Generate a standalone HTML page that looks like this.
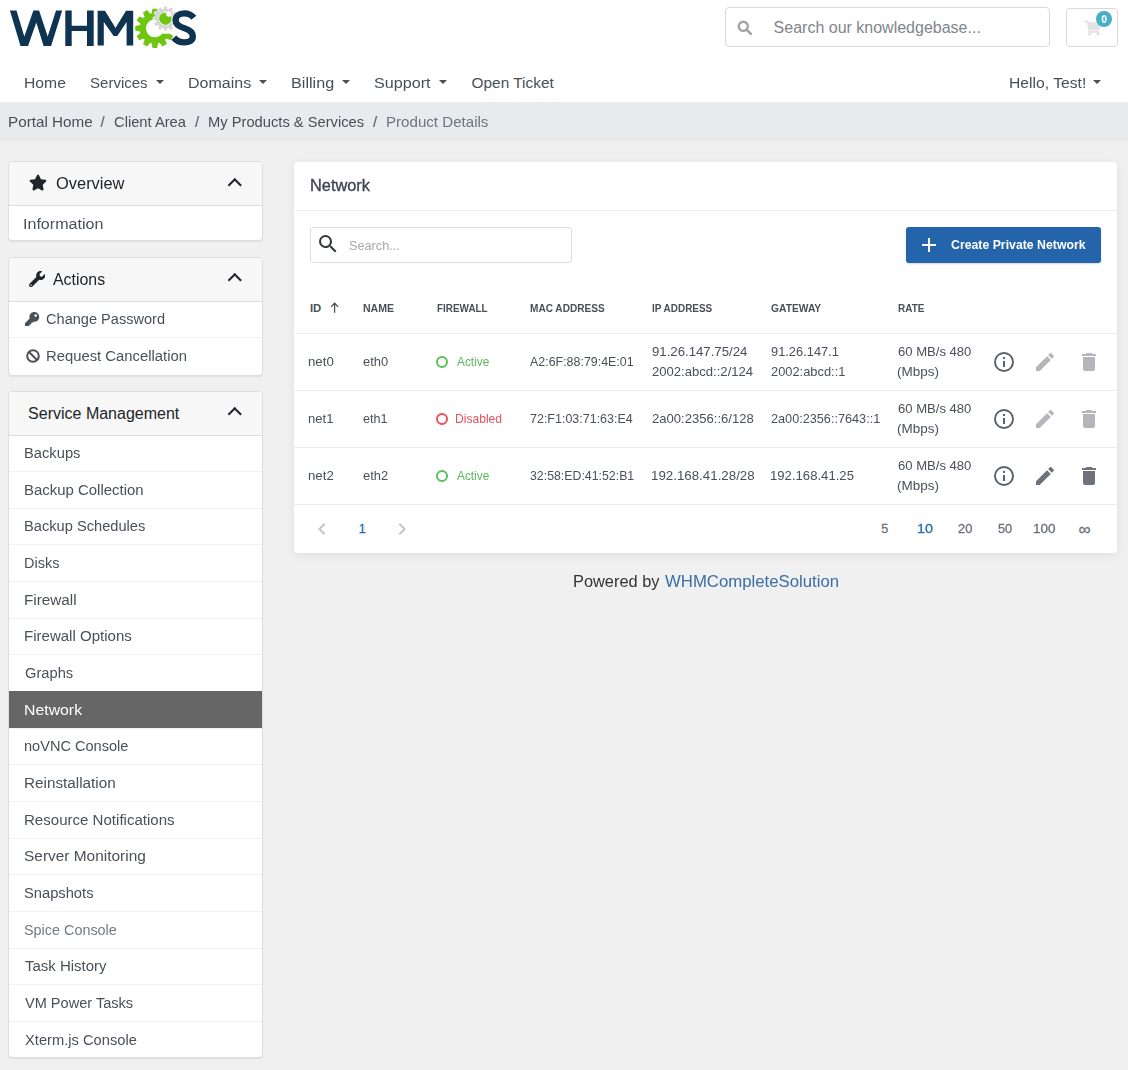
<!DOCTYPE html>
<html><head><meta charset="utf-8"><title>Network</title>
<style>
*{box-sizing:border-box}
html,body{margin:0;padding:0}
body{width:1128px;height:1070px;overflow:hidden;position:relative;background:#f0f0f0;font-family:"Liberation Sans",sans-serif;color:#333}
.a{position:absolute;white-space:nowrap;line-height:1}
#hdr{position:absolute;left:0;top:0;width:1128px;height:102px;background:#fff}
#bc{position:absolute;left:0;top:102px;width:1128px;height:39px;background:#e8ebee}
.caret{position:absolute;width:0;height:0;border-left:4.2px solid transparent;border-right:4.2px solid transparent;border-top:4.5px solid #484f57;top:80px}
.card{position:absolute;left:8px;width:255px;background:#fff;border:1px solid #dedede;border-radius:4px;box-shadow:0 1px 1px rgba(0,0,0,.07)}
.ch{position:absolute;left:0;top:0;right:0;background:#f7f7f7;border-bottom:1px solid #dcdcdc;border-radius:3px 3px 0 0}
.sep{position:absolute;left:9px;width:253px;height:1px;background:#f1f1f1}
.chev{position:absolute;width:9.5px;height:9.5px;border-left:2.4px solid #212529;border-top:2.4px solid #212529;transform:rotate(45deg)}
#main{position:absolute;left:294px;top:162px;width:823px;height:391px;background:#fff;border-radius:4px;box-shadow:0 2px 10px rgba(0,0,0,.07)}
.hl{position:absolute;left:294px;width:823px;height:1px;background:#e9ebf0}
</style></head>
<body>
<div id="hdr"></div>
<!--LOGO-->
<svg class="a" style="left:0;top:0" width="210" height="55" viewBox="0 0 210 55">
  <defs><mask id="cm"><rect x="0" y="0" width="210" height="55" fill="#fff"/><polygon points="154.9,28.3 174.9,-6.3 200,-6.3 200,33.8 154.9,33.8" fill="#000"/></mask></defs>
  <g fill="#0f3452">
    <polygon points="9.9,10.6 16.5,10.6 24.3,36.5 33.4,10.6 39.1,10.6 47.7,36.5 56,10.6 62.2,10.6 51.1,46.1 43.6,46.1 36.3,22.5 28,46.1 20.5,46.1"/>
    <polygon points="65.3,10.6 71.7,10.6 71.7,25.7 87,25.7 87,10.6 93.7,10.6 93.7,46.1 87,46.1 87,31 71.7,31 71.7,46.1 65.3,46.1"/>
    <polygon points="97.6,10.7 105,10.7 115.5,28 126,10.7 133.2,10.7 133.2,45.6 126.6,45.6 126.6,22 117.3,36 113.7,36 103.8,22 103.8,45.6 97.6,45.6"/>
  </g>
  <path d="M169.87,25.12 L174.55,25.89 L174.55,30.71 L169.87,31.48 L169.75,32.00 L169.61,32.52 L169.45,33.03 L173.13,36.04 L170.71,40.22 L166.27,38.54 L165.91,38.93 L165.53,39.31 L165.14,39.67 L166.82,44.11 L162.64,46.53 L159.63,42.85 L159.12,43.01 L158.60,43.15 L158.08,43.27 L157.31,47.95 L152.49,47.95 L151.72,43.27 L151.20,43.15 L150.68,43.01 L150.17,42.85 L147.16,46.53 L142.98,44.11 L144.66,39.67 L144.27,39.31 L143.89,38.93 L143.53,38.54 L139.09,40.22 L136.67,36.04 L140.35,33.03 L140.19,32.52 L140.05,32.00 L139.93,31.48 L135.25,30.71 L135.25,25.89 L139.93,25.12 L140.05,24.60 L140.19,24.08 L140.35,23.57 L136.67,20.56 L139.09,16.38 L143.53,18.06 L143.89,17.67 L144.27,17.29 L144.66,16.93 L142.98,12.49 L147.16,10.07 L150.17,13.75 L150.68,13.59 L151.20,13.45 L151.72,13.33 L152.49,8.65 L157.31,8.65 L158.08,13.33 L158.60,13.45 L159.12,13.59 L159.63,13.75 L162.64,10.07 L166.82,12.49 L165.14,16.93 L165.53,17.29 L165.91,17.67 L166.27,18.06 L170.71,16.38 L173.13,20.56 L169.45,23.57 L169.61,24.08 L169.75,24.60 Z M163.90,28.30 A9.00,9.00 0 1,0 145.90,28.30 A9.00,9.00 0 1,0 163.90,28.30 Z" fill="#6fc60f" fill-rule="evenodd" mask="url(#cm)"/>
  <path d="M163.68,8.77 L163.96,6.09 L167.04,6.09 L167.32,8.77 L167.83,8.88 L168.34,9.01 L168.84,9.17 L170.42,7.00 L173.08,8.54 L171.99,11.00 L172.38,11.35 L172.75,11.72 L173.10,12.11 L175.56,11.02 L177.10,13.68 L174.93,15.26 L175.09,15.76 L175.22,16.27 L175.33,16.78 L178.01,17.06 L178.01,20.14 L175.33,20.42 L175.22,20.93 L175.09,21.44 L174.93,21.94 L177.10,23.52 L175.56,26.18 L173.10,25.09 L172.75,25.48 L172.38,25.85 L171.99,26.20 L173.08,28.66 L170.42,30.20 L168.84,28.03 L168.34,28.19 L167.83,28.32 L167.32,28.43 L167.04,31.11 L163.96,31.11 L163.68,28.43 L163.17,28.32 L162.66,28.19 L162.16,28.03 L160.58,30.20 L157.92,28.66 L159.01,26.20 L158.62,25.85 L158.25,25.48 L157.90,25.09 L155.44,26.18 L153.90,23.52 L156.07,21.94 L155.91,21.44 L155.78,20.93 L155.67,20.42 L152.99,20.14 L152.99,17.06 L155.67,16.78 L155.78,16.27 L155.91,15.76 L156.07,15.26 L153.90,13.68 L155.44,11.02 L157.90,12.11 L158.25,11.72 L158.62,11.35 L159.01,11.00 L157.92,8.54 L160.58,7.00 L162.16,9.17 L162.66,9.01 L163.17,8.88 Z M172.00,18.60 A6.50,6.50 0 1,0 159.00,18.60 A6.50,6.50 0 1,0 172.00,18.60 Z" fill="#d5d5d5" fill-rule="evenodd" stroke="#fff" stroke-width="0.6"/>
  <circle cx="165.5" cy="18.8" r="6.1" fill="#6fc60f"/>
  <circle cx="168.8" cy="14.0" r="2.7" fill="#fff"/>
  <path d="M193.8,17.8 C191,14.2 187.5,13.4 184.2,13.4 C179,13.4 175.6,16 175.6,20.3 C175.6,25 179.5,26.8 184.5,28.3 C189.5,29.8 192.8,32.2 192.8,36.6 C192.8,40.8 189,42.4 184.3,42.4 C179.8,42.4 176.3,40.6 173.8,37.6" fill="none" stroke="#fff" stroke-width="7.6"/>
  <path d="M193.8,17.8 C191,14.2 187.5,13.4 184.2,13.4 C179,13.4 175.6,16 175.6,20.3 C175.6,25 179.5,26.8 184.5,28.3 C189.5,29.8 192.8,32.2 192.8,36.6 C192.8,40.8 189,42.4 184.3,42.4 C179.8,42.4 176.3,40.6 173.8,37.6" fill="none" stroke="#0f3452" stroke-width="6.4"/>
</svg>
<!-- search -->
<div class="a" style="left:725px;top:7px;width:325px;height:40px;border:1px solid #d9d9d9;border-radius:4px;background:#fff"></div>
<svg class="a" style="left:737px;top:20px" width="16" height="16" viewBox="0 0 16 16"><circle cx="6.3" cy="6.3" r="4.6" fill="none" stroke="#a3a3a3" stroke-width="2.4"/><line x1="9.6" y1="9.6" x2="13.8" y2="13.8" stroke="#a3a3a3" stroke-width="2.6" stroke-linecap="round"/></svg>
<!-- cart -->
<div class="a" style="left:1066px;top:8px;width:52px;height:39px;border:1px solid #d9d9d9;border-radius:4px;background:#fff"></div>
<!--CART-->
<svg class="a" style="left:1083.5px;top:19.8px" width="17" height="16" viewBox="0 0 576 512"><path fill="#e2e2e2" d="M528.12 301.319l47.273-208C578.806 78.301 567.391 64 551.99 64H159.208l-9.166-44.810C147.758 8.021 137.930 0 126.529 0H24C10.745 0 0 10.745 0 24v16c0 13.255 10.745 24 24 24h69.883l70.248 343.435C147.325 417.100 136 435.222 136 456c0 30.928 25.072 56 56 56s56-25.072 56-56c0-15.674-6.447-29.835-16.824-40h209.647C430.447 426.165 424 440.326 424 456c0 30.928 25.072 56 56 56s56-25.072 56-56c0-22.172-12.888-41.332-31.579-50.405l5.517-24.276c3.413-15.018-8.002-29.319-23.403-29.319H218.117l-6.545-32h293.145c11.206 0 20.920-7.754 23.403-18.681z"/></svg>
<div class="a" style="left:1096px;top:11px;width:16px;height:16px;border-radius:50%;background:#47afc3;color:#fff;font-size:10px;font-weight:bold;text-align:center;line-height:17px">0</div>
<!-- nav carets -->
<div class="caret" style="left:155.5px"></div>
<div class="caret" style="left:259px"></div>
<div class="caret" style="left:341.5px"></div>
<div class="caret" style="left:439px"></div>
<div class="caret" style="left:1093px"></div>
<div id="bc"></div>

<!-- sidebar card 1 -->
<div class="card" style="top:161px;height:80px"><div class="ch" style="height:44px"></div></div>
<svg class="a" style="left:29px;top:174px" width="18" height="17" viewBox="0 0 576 512"><path fill="#212529" d="M259.3 17.8L194 150.2 47.9 171.5c-26.2 3.8-36.7 36.1-17.7 54.6l105.7 103-25 145.5c-4.5 26.3 23.2 46 46.4 33.7L288 439.6l130.7 68.7c23.2 12.2 50.9-7.4 46.4-33.7l-25-145.5 105.7-103c19-18.5 8.5-50.8-17.700-54.6L382 150.2 316.7 17.8c-11.7-23.6-45.6-23.9-57.4 0z"/></svg>
<div class="chev" style="left:230.3px;top:180px"></div>

<!-- sidebar card 2 -->
<div class="card" style="top:257px;height:119px"><div class="ch" style="height:44px"></div></div>
<div class="sep" style="top:337px"></div>
<svg class="a" style="left:28.8px;top:271px" width="16.2" height="16.2" viewBox="0 0 512 512"><path fill="#212529" d="M507.73 109.1c-2.24-9.03-13.540-12.09-20.12-5.51l-74.36 74.36-67.88-11.31-11.31-67.88 74.36-74.36c6.62-6.62 3.43-17.9-5.66-20.16-47.38-11.74-99.55.91-136.58 37.93-39.64 39.64-50.55 97.1-34.05 147.2L18.74 402.76c-24.99 24.99-24.99 65.51 0 90.5 24.99 24.99 65.51 24.99 90.5 0l213.21-213.21c50.12 16.71 107.47 5.68 147.37-34.22 37.07-37.07 49.7-89.32 37.91-136.73zM64 472c-13.25 0-24-10.75-24-24 0-13.26 10.750-24 24-24s24 10.74 24 24c0 13.25-10.75 24-24 24z"/></svg>
<div class="chev" style="left:230.3px;top:275px"></div>
<svg class="a" style="left:25.4px;top:311.7px" width="14.2" height="14.2" viewBox="0 0 512 512"><path fill="#495057" d="M512 176.001C512 273.203 433.202 352 336 352c-11.22 0-22.19-1.062-32.827-3.069l-24.012 27.014A23.999 23.999 0 0 1 261.223 384H224v40c0 13.255-10.745 24-24 24h-40v40c0 13.255-10.745 24-24 24H24c-13.255 0-24-10.745-24-24v-78.059c0-6.365 2.529-12.47 7.029-16.971l161.802-161.802C163.108 213.814 160 195.271 160 176 160 78.798 238.797.001 335.999 0 433.488-.001 512 78.511 512 176.001zM336 128c0 26.51 21.49 48 48 48s48-21.49 48-48-21.49-48-48-48-48 21.49-48 48z"/></svg>
<svg class="a" style="left:26px;top:349px" width="14" height="14" viewBox="0 0 14 14"><circle cx="7" cy="7" r="5.8" fill="none" stroke="#495057" stroke-width="2"/><line x1="3" y1="3" x2="11" y2="11" stroke="#495057" stroke-width="2"/></svg>

<!-- sidebar card 3 -->
<div class="card" style="top:391px;height:667px"><div class="ch" style="height:44px"></div></div>
<div class="chev" style="left:230.3px;top:409px"></div>
<div class="sep" style="top:471.0px"></div>
<div class="sep" style="top:507.6px"></div>
<div class="sep" style="top:544.3px"></div>
<div class="sep" style="top:580.9px"></div>
<div class="sep" style="top:617.6px"></div>
<div class="sep" style="top:654.3px"></div>
<div class="sep" style="top:690.9px"></div>
<div class="a" style="left:9px;top:691px;width:253px;height:36.8px;background:#666"></div>
<div class="sep" style="top:727.6px"></div>
<div class="sep" style="top:764.2px"></div>
<div class="sep" style="top:800.9px"></div>
<div class="sep" style="top:837.6px"></div>
<div class="sep" style="top:874.2px"></div>
<div class="sep" style="top:910.9px"></div>
<div class="sep" style="top:947.5px"></div>
<div class="sep" style="top:984.2px"></div>
<div class="sep" style="top:1020.9px"></div>

<!-- main card -->
<div id="main"></div>
<div class="hl" style="top:210px"></div>
<div class="a" style="left:310px;top:227px;width:262px;height:36px;border:1px solid #dcdde6;border-radius:3px"></div>
<svg class="a" style="left:315.6px;top:232px" width="24" height="24" viewBox="0 0 24 24"><path fill="#33363c" d="M9.5,3A6.5,6.5 0 0,1 16,9.5C16,11.11 15.41,12.59 14.44,13.73L14.71,14H15.5L20.5,19L19,20.5L14,15.5V14.71L13.73,14.44C12.59,15.41 11.11,16 9.5,16A6.5,6.5 0 0,1 3,9.5A6.5,6.5 0 0,1 9.5,3M9.5,5C7,5 5,7 5,9.5C5,12 7,14 9.5,14C12,14 14,12 14,9.5C14,7 12,5 9.5,5Z"/></svg>
<div class="a" style="left:906px;top:227px;width:195px;height:36px;background:#2364aa;border-radius:3px;box-shadow:0 1px 2px rgba(0,0,0,.15)"></div>
<svg class="a" style="left:916.5px;top:233px" width="24" height="24" viewBox="0 0 24 24"><path fill="#fff" d="M19,13H13V19H11V13H5V11H11V5H13V11H19V13Z"/></svg>
<svg class="a" style="left:329.5px;top:302.3px" width="10" height="11" viewBox="0 0 10 11"><path d="M4.6,1.2V10.8M1,4.9L4.6,1.2L8.2,4.9" fill="none" stroke="#4a4f58" stroke-width="1.25"/></svg>
<div class="hl" style="top:333px"></div>
<div class="hl" style="top:390px"></div>
<div class="hl" style="top:447px"></div>
<div class="hl" style="top:504px"></div>
<div class="a" style="left:436px;top:356px;width:12px;height:12px;border:2px solid #5ac05a;border-radius:50%"></div>
<div class="a" style="left:436px;top:413px;width:12px;height:12px;border:2px solid #e8505b;border-radius:50%"></div>
<div class="a" style="left:436px;top:470px;width:12px;height:12px;border:2px solid #5ac05a;border-radius:50%"></div>
<svg class="a" style="left:992px;top:350px" width="24" height="24" viewBox="0 0 24 24"><path fill="#5c626c" d="M11,9H13V7H11M12,20C7.59,20 4,16.41 4,12C4,7.59 7.59,4 12,4C16.41,4 20,7.59 20,12C20,16.41 16.41,20 12,20M12,2A10,10 0 0,0 2,12A10,10 0 0,0 12,22A10,10 0 0,0 22,12A10,10 0 0,0 12,2M11,17H13V11H11V17Z"/></svg>
<svg class="a" style="left:1033px;top:350px" width="24" height="24" viewBox="0 0 24 24"><path fill="#b4b6bb" d="M20.71,7.04C21.1,6.65 21.1,6 20.71,5.63L18.37,3.29C18,2.9 17.35,2.9 16.96,3.29L15.12,5.12L18.87,8.87M3,17.25V21H6.75L17.81,9.93L14.06,6.18L3,17.25Z"/></svg>
<svg class="a" style="left:1076.5px;top:350px" width="24" height="24" viewBox="0 0 24 24"><path fill="#b4b6bb" d="M19,4H15.5L14.5,3H9.5L8.5,4H5V6H19M6,19A2,2 0 0,0 8,21H16A2,2 0 0,0 18,19V7H6V19Z"/></svg>
<svg class="a" style="left:992px;top:407px" width="24" height="24" viewBox="0 0 24 24"><path fill="#5c626c" d="M11,9H13V7H11M12,20C7.59,20 4,16.41 4,12C4,7.59 7.59,4 12,4C16.41,4 20,7.59 20,12C20,16.41 16.41,20 12,20M12,2A10,10 0 0,0 2,12A10,10 0 0,0 12,22A10,10 0 0,0 22,12A10,10 0 0,0 12,2M11,17H13V11H11V17Z"/></svg>
<svg class="a" style="left:1033px;top:407px" width="24" height="24" viewBox="0 0 24 24"><path fill="#b4b6bb" d="M20.71,7.04C21.1,6.65 21.1,6 20.71,5.63L18.37,3.29C18,2.9 17.35,2.9 16.96,3.29L15.12,5.12L18.87,8.87M3,17.25V21H6.75L17.81,9.93L14.06,6.18L3,17.25Z"/></svg>
<svg class="a" style="left:1076.5px;top:407px" width="24" height="24" viewBox="0 0 24 24"><path fill="#b4b6bb" d="M19,4H15.5L14.5,3H9.5L8.5,4H5V6H19M6,19A2,2 0 0,0 8,21H16A2,2 0 0,0 18,19V7H6V19Z"/></svg>
<svg class="a" style="left:992px;top:464px" width="24" height="24" viewBox="0 0 24 24"><path fill="#5c626c" d="M11,9H13V7H11M12,20C7.59,20 4,16.41 4,12C4,7.59 7.59,4 12,4C16.41,4 20,7.59 20,12C20,16.41 16.41,20 12,20M12,2A10,10 0 0,0 2,12A10,10 0 0,0 12,22A10,10 0 0,0 22,12A10,10 0 0,0 12,2M11,17H13V11H11V17Z"/></svg>
<svg class="a" style="left:1033px;top:464px" width="24" height="24" viewBox="0 0 24 24"><path fill="#6d727b" d="M20.71,7.04C21.1,6.65 21.1,6 20.71,5.63L18.37,3.29C18,2.9 17.35,2.9 16.96,3.29L15.12,5.12L18.87,8.87M3,17.25V21H6.75L17.81,9.93L14.06,6.18L3,17.25Z"/></svg>
<svg class="a" style="left:1076.5px;top:464px" width="24" height="24" viewBox="0 0 24 24"><path fill="#6d727b" d="M19,4H15.5L14.5,3H9.5L8.5,4H5V6H19M6,19A2,2 0 0,0 8,21H16A2,2 0 0,0 18,19V7H6V19Z"/></svg>
<!-- pagination -->
<svg class="a" style="left:310px;top:517px" width="24" height="24" viewBox="0 0 24 24"><path fill="#c3c5ca" d="M15.41,16.58L10.83,12L15.41,7.41L14,6L8,12L14,18L15.41,16.58Z"/></svg>
<svg class="a" style="left:390px;top:517px" width="24" height="24" viewBox="0 0 24 24"><path fill="#c3c5ca" d="M8.59,16.58L13.17,12L8.59,7.41L10,6L16,12L10,18L8.59,16.58Z"/></svg>
<div class="a" id="nav_home" style="left:24.20px;top:75.00px;font-size:15.4px;color:#484f57;transform:scaleX(1.0202);transform-origin:0 0">Home</div>
<div class="a" id="nav_services" style="left:89.80px;top:75.00px;font-size:15.4px;color:#484f57;transform:scaleX(0.9761);transform-origin:0 0">Services</div>
<div class="a" id="nav_domains" style="left:187.80px;top:75.00px;font-size:15.4px;color:#484f57;transform:scaleX(1.0403);transform-origin:0 0">Domains</div>
<div class="a" id="nav_billing" style="left:291.00px;top:75.00px;font-size:15.4px;color:#484f57;transform:scaleX(1.0512);transform-origin:0 0">Billing</div>
<div class="a" id="nav_support" style="left:373.60px;top:75.00px;font-size:15.4px;color:#484f57;transform:scaleX(1.0493);transform-origin:0 0">Support</div>
<div class="a" id="nav_open" style="left:471.60px;top:75.00px;font-size:15.4px;color:#484f57">Open Ticket</div>
<div class="a" id="nav_hello" style="left:1008.60px;top:75.00px;font-size:15.4px;color:#484f57;transform:scaleX(1.0193);transform-origin:0 0">Hello, Test!</div>
<div class="a" id="bc1" style="left:7.80px;top:114.60px;font-size:14.6px;color:#484f57;transform:scaleX(1.0452);transform-origin:0 0">Portal Home</div>
<div class="a" id="bcs1" style="left:100.50px;top:114.60px;font-size:14.6px;color:#484f57">/</div>
<div class="a" id="bc2" style="left:113.60px;top:114.60px;font-size:14.6px;color:#484f57;transform:scaleX(1.0084);transform-origin:0 0">Client Area</div>
<div class="a" id="bcs2" style="left:195.00px;top:114.60px;font-size:14.6px;color:#484f57">/</div>
<div class="a" id="bc3" style="left:207.60px;top:114.60px;font-size:14.6px;color:#484f57;transform:scaleX(1.0078);transform-origin:0 0">My Products &amp; Services</div>
<div class="a" id="bcs3" style="left:373.00px;top:114.60px;font-size:14.6px;color:#484f57">/</div>
<div class="a" id="bc4" style="left:385.80px;top:114.60px;font-size:14.6px;color:#484f57;color:#6c757d;transform:scaleX(1.0348);transform-origin:0 0">Product Details</div>
<div class="a" id="kb" style="left:773.60px;top:19.50px;font-size:16px;color:#80858c">Search our knowledgebase...</div>
<div class="a" id="sh_over" style="left:55.60px;top:176.10px;font-size:16px;color:#212529;transform:scaleX(1.0270);transform-origin:0 0">Overview</div>
<div class="a" id="si_info" style="left:22.80px;top:217.15px;font-size:14px;color:#495057;transform:scaleX(1.1478);transform-origin:0 0">Information</div>
<div class="a" id="sh_act" style="left:53.20px;top:271.90px;font-size:16px;color:#212529;transform:scaleX(0.9928);transform-origin:0 0">Actions</div>
<div class="a" id="si_chpw" style="left:46.40px;top:312.35px;font-size:14px;color:#495057;transform:scaleX(1.0408);transform-origin:0 0">Change Password</div>
<div class="a" id="si_cancel" style="left:46.00px;top:348.65px;font-size:14px;color:#495057;transform:scaleX(1.0590);transform-origin:0 0">Request Cancellation</div>
<div class="a" id="sh_sm" style="left:28.10px;top:406.10px;font-size:16px;color:#212529">Service Management</div>
<div class="a" id="sm0" style="left:23.60px;top:445.95px;font-size:14px;color:#495057;transform:scaleX(1.0511);transform-origin:0 0">Backups</div>
<div class="a" id="sm1" style="left:23.60px;top:482.61px;font-size:14px;color:#495057;transform:scaleX(1.0676);transform-origin:0 0">Backup Collection</div>
<div class="a" id="sm2" style="left:23.60px;top:519.27px;font-size:14px;color:#495057;transform:scaleX(1.0459);transform-origin:0 0">Backup Schedules</div>
<div class="a" id="sm3" style="left:23.60px;top:555.93px;font-size:14px;color:#495057;transform:scaleX(1.0339);transform-origin:0 0">Disks</div>
<div class="a" id="sm4" style="left:23.60px;top:592.59px;font-size:14px;color:#495057;transform:scaleX(1.0919);transform-origin:0 0">Firewall</div>
<div class="a" id="sm5" style="left:23.60px;top:629.25px;font-size:14px;color:#495057;transform:scaleX(1.0738);transform-origin:0 0">Firewall Options</div>
<div class="a" id="sm6" style="left:24.60px;top:665.91px;font-size:14px;color:#495057;transform:scaleX(1.0500);transform-origin:0 0">Graphs</div>
<div class="a" id="sm7" style="left:23.60px;top:702.57px;font-size:14px;color:#495057;color:#fff;transform:scaleX(1.1304);transform-origin:0 0">Network</div>
<div class="a" id="sm8" style="left:23.60px;top:739.23px;font-size:14px;color:#495057;transform:scaleX(1.0393);transform-origin:0 0">noVNC Console</div>
<div class="a" id="sm9" style="left:23.60px;top:775.89px;font-size:14px;color:#495057;transform:scaleX(1.0904);transform-origin:0 0">Reinstallation</div>
<div class="a" id="sm10" style="left:23.60px;top:812.55px;font-size:14px;color:#495057;transform:scaleX(1.0755);transform-origin:0 0">Resource Notifications</div>
<div class="a" id="sm11" style="left:23.60px;top:849.21px;font-size:14px;color:#495057;transform:scaleX(1.1028);transform-origin:0 0">Server Monitoring</div>
<div class="a" id="sm12" style="left:23.60px;top:885.87px;font-size:14px;color:#495057;transform:scaleX(1.0503);transform-origin:0 0">Snapshots</div>
<div class="a" id="sm13" style="left:23.60px;top:922.53px;font-size:14px;color:#495057;color:#737a82;transform:scaleX(1.0282);transform-origin:0 0">Spice Console</div>
<div class="a" id="sm14" style="left:24.60px;top:959.19px;font-size:14px;color:#495057;transform:scaleX(1.0691);transform-origin:0 0">Task History</div>
<div class="a" id="sm15" style="left:24.60px;top:995.85px;font-size:14px;color:#495057;transform:scaleX(1.0395);transform-origin:0 0">VM Power Tasks</div>
<div class="a" id="sm16" style="left:24.60px;top:1032.51px;font-size:14px;color:#495057;transform:scaleX(1.0502);transform-origin:0 0">Xterm.js Console</div>
<div class="a" id="m_title" style="left:309.60px;top:178.00px;font-size:16.8px;-webkit-text-stroke:0.35px #3d4350;color:#3d4350;transform:scaleX(0.9748);transform-origin:0 0">Network</div>
<div class="a" id="m_search" style="left:349.20px;top:239.10px;font-size:13px;color:#a5a8ae;transform:scaleX(0.9769);transform-origin:0 0">Search...</div>
<div class="a" id="m_btn" style="left:950.60px;top:238.10px;font-size:13px;font-weight:bold;color:#fff;transform:scaleX(0.9455);transform-origin:0 0">Create Private Network</div>
<div class="a" id="th_id" style="left:309.90px;top:302.60px;font-size:11.3px;font-weight:bold;color:#4a4f58">ID</div>
<div class="a" id="th_name" style="left:362.90px;top:302.60px;font-size:11.3px;font-weight:bold;color:#4a4f58;transform:scaleX(0.9342);transform-origin:0 0">NAME</div>
<div class="a" id="th_fw" style="left:436.50px;top:302.60px;font-size:11.3px;font-weight:bold;color:#4a4f58;transform:scaleX(0.8775);transform-origin:0 0">FIREWALL</div>
<div class="a" id="th_mac" style="left:530.20px;top:302.60px;font-size:11.3px;font-weight:bold;color:#4a4f58;transform:scaleX(0.8918);transform-origin:0 0">MAC ADDRESS</div>
<div class="a" id="th_ip" style="left:652.10px;top:302.60px;font-size:11.3px;font-weight:bold;color:#4a4f58;transform:scaleX(0.8796);transform-origin:0 0">IP ADDRESS</div>
<div class="a" id="th_gw" style="left:771.00px;top:302.60px;font-size:11.3px;font-weight:bold;color:#4a4f58;transform:scaleX(0.9091);transform-origin:0 0">GATEWAY</div>
<div class="a" id="th_rate" style="left:898.30px;top:302.60px;font-size:11.3px;font-weight:bold;color:#4a4f58;transform:scaleX(0.8806);transform-origin:0 0">RATE</div>
<div class="a" id="r0_id" style="left:308.40px;top:354.90px;font-size:13px;color:#4a4f58;transform:scaleX(1.0169);transform-origin:0 0">net0</div>
<div class="a" id="r0_eth" style="left:362.90px;top:354.90px;font-size:13px;color:#4a4f58;transform:scaleX(0.9931);transform-origin:0 0">eth0</div>
<div class="a" id="r0_st" style="left:456.70px;top:354.90px;font-size:13px;color:#5cb85c;transform:scaleX(0.9116);transform-origin:0 0">Active</div>
<div class="a" id="r0_mac" style="left:530.20px;top:354.90px;font-size:13px;color:#4a4f58;transform:scaleX(0.9560);transform-origin:0 0">A2:6F:88:79:4E:01</div>
<div class="a" id="r0_ip0" style="left:652.10px;top:344.90px;font-size:13px;color:#4a4f58;transform:scaleX(1.0150);transform-origin:0 0">91.26.147.75/24</div>
<div class="a" id="r0_ip1" style="left:652.10px;top:365.00px;font-size:13px;color:#4a4f58;transform:scaleX(1.0061);transform-origin:0 0">2002:abcd::2/124</div>
<div class="a" id="r0_gw0" style="left:771.00px;top:344.90px;font-size:13px;color:#4a4f58;transform:scaleX(0.9886);transform-origin:0 0">91.26.147.1</div>
<div class="a" id="r0_gw1" style="left:771.00px;top:365.00px;font-size:13px;color:#4a4f58;transform:scaleX(0.9895);transform-origin:0 0">2002:abcd::1</div>
<div class="a" id="r0_rate0" style="left:898.30px;top:344.90px;font-size:13px;color:#4a4f58;transform:scaleX(1.0056);transform-origin:0 0">60 MB/s 480</div>
<div class="a" id="r0_rate1" style="left:897.30px;top:365.00px;font-size:13px;color:#4a4f58;transform:scaleX(1.0363);transform-origin:0 0">(Mbps)</div>
<div class="a" id="r1_id" style="left:308.40px;top:412.10px;font-size:13px;color:#4a4f58;transform:scaleX(1.0034);transform-origin:0 0">net1</div>
<div class="a" id="r1_eth" style="left:362.90px;top:412.10px;font-size:13px;color:#4a4f58;transform:scaleX(0.9687);transform-origin:0 0">eth1</div>
<div class="a" id="r1_st" style="left:455.30px;top:412.10px;font-size:13px;color:#e8505b;transform:scaleX(0.9307);transform-origin:0 0">Disabled</div>
<div class="a" id="r1_mac" style="left:530.20px;top:412.10px;font-size:13px;color:#4a4f58;transform:scaleX(0.9606);transform-origin:0 0">72:F1:03:71:63:E4</div>
<div class="a" id="r1_ip0" style="left:652.10px;top:412.10px;font-size:13px;color:#4a4f58;transform:scaleX(1.0060);transform-origin:0 0">2a00:2356::6/128</div>
<div class="a" id="r1_gw0" style="left:771.00px;top:412.10px;font-size:13px;color:#4a4f58;transform:scaleX(0.9751);transform-origin:0 0">2a00:2356::7643::1</div>
<div class="a" id="r1_rate0" style="left:898.30px;top:402.10px;font-size:13px;color:#4a4f58;transform:scaleX(1.0056);transform-origin:0 0">60 MB/s 480</div>
<div class="a" id="r1_rate1" style="left:897.30px;top:422.30px;font-size:13px;color:#4a4f58;transform:scaleX(1.0363);transform-origin:0 0">(Mbps)</div>
<div class="a" id="r2_id" style="left:308.40px;top:469.10px;font-size:13px;color:#4a4f58;transform:scaleX(1.0169);transform-origin:0 0">net2</div>
<div class="a" id="r2_eth" style="left:362.90px;top:469.10px;font-size:13px;color:#4a4f58;transform:scaleX(0.9931);transform-origin:0 0">eth2</div>
<div class="a" id="r2_st" style="left:456.70px;top:469.10px;font-size:13px;color:#5cb85c;transform:scaleX(0.9116);transform-origin:0 0">Active</div>
<div class="a" id="r2_mac" style="left:530.20px;top:469.10px;font-size:13px;color:#4a4f58;transform:scaleX(0.9487);transform-origin:0 0">32:58:ED:41:52:B1</div>
<div class="a" id="r2_ip0" style="left:651.10px;top:469.10px;font-size:13px;color:#4a4f58;transform:scaleX(1.0240);transform-origin:0 0">192.168.41.28/28</div>
<div class="a" id="r2_gw0" style="left:770.20px;top:469.10px;font-size:13px;color:#4a4f58;transform:scaleX(1.0100);transform-origin:0 0">192.168.41.25</div>
<div class="a" id="r2_rate0" style="left:898.30px;top:459.00px;font-size:13px;color:#4a4f58;transform:scaleX(1.0056);transform-origin:0 0">60 MB/s 480</div>
<div class="a" id="r2_rate1" style="left:897.30px;top:479.00px;font-size:13px;color:#4a4f58;transform:scaleX(1.0363);transform-origin:0 0">(Mbps)</div>
<div class="a" id="pg_1" style="left:358.70px;top:523.10px;font-size:12.6px;color:#2a6ab0;-webkit-text-stroke:0.3px #2a6ab0">1</div>
<div class="a" id="pg_5" style="left:881.30px;top:523.10px;font-size:12.6px;color:#6b7079;-webkit-text-stroke:0.3px #6b7079">5</div>
<div class="a" id="pg_10" style="left:917.40px;top:523.10px;font-size:12.6px;color:#2a6ab0;-webkit-text-stroke:0.3px #2a6ab0;transform:scaleX(1.1415);transform-origin:0 0">10</div>
<div class="a" id="pg_20" style="left:957.80px;top:523.10px;font-size:12.6px;color:#6b7079;-webkit-text-stroke:0.3px #6b7079;transform:scaleX(1.0266);transform-origin:0 0">20</div>
<div class="a" id="pg_50" style="left:997.60px;top:523.10px;font-size:12.6px;color:#6b7079;-webkit-text-stroke:0.3px #6b7079;transform:scaleX(1.0163);transform-origin:0 0">50</div>
<div class="a" id="pg_100" style="left:1033.20px;top:523.10px;font-size:12.6px;color:#6b7079;-webkit-text-stroke:0.3px #6b7079;transform:scaleX(1.0714);transform-origin:0 0">100</div>
<div class="a" id="pg_inf" style="left:1078.60px;top:520.50px;font-size:17px;color:#6b7079;-webkit-text-stroke:0.3px #6b7079">&#8734;</div>
<div class="a" id="foot1" style="left:572.80px;top:574.10px;font-size:16px;color:#333;transform:scaleX(1.0238);transform-origin:0 0">Powered by</div>
<div class="a" id="foot2" style="left:665.30px;top:574.10px;font-size:16px;color:#3a6ea5;transform:scaleX(1.0470);transform-origin:0 0">WHMCompleteSolution</div>
</body></html>
